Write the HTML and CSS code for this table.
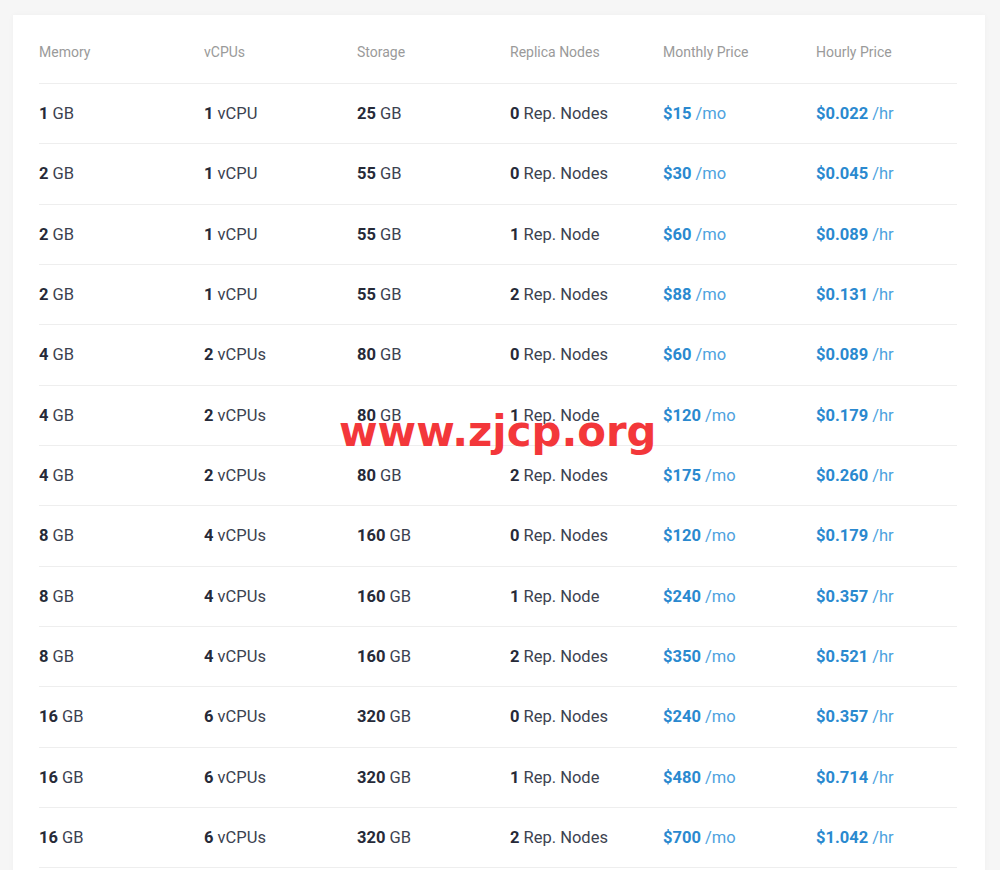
FILE: index.html
```html
<!DOCTYPE html>
<html lang="en">
<head>
<meta charset="utf-8">
<title>Pricing</title>
<link rel="stylesheet" href="styles.css">
</head>
<body>
<div class="card">
  <div class="table">
    <div class="row head">
      <div>Memory</div><div>vCPUs</div><div>Storage</div><div>Replica Nodes</div><div>Monthly Price</div><div>Hourly Price</div>
    </div>
    <div class="row"><div><b>1</b> GB</div><div><b>1</b> vCPU</div><div><b>25</b> GB</div><div><b>0</b> Rep. Nodes</div><div class="p"><b>$15</b> /mo</div><div class="p"><b>$0.022</b> /hr</div></div>
    <div class="row"><div><b>2</b> GB</div><div><b>1</b> vCPU</div><div><b>55</b> GB</div><div><b>0</b> Rep. Nodes</div><div class="p"><b>$30</b> /mo</div><div class="p"><b>$0.045</b> /hr</div></div>
    <div class="row"><div><b>2</b> GB</div><div><b>1</b> vCPU</div><div><b>55</b> GB</div><div><b>1</b> Rep. Node</div><div class="p"><b>$60</b> /mo</div><div class="p"><b>$0.089</b> /hr</div></div>
    <div class="row"><div><b>2</b> GB</div><div><b>1</b> vCPU</div><div><b>55</b> GB</div><div><b>2</b> Rep. Nodes</div><div class="p"><b>$88</b> /mo</div><div class="p"><b>$0.131</b> /hr</div></div>
    <div class="row"><div><b>4</b> GB</div><div><b>2</b> vCPUs</div><div><b>80</b> GB</div><div><b>0</b> Rep. Nodes</div><div class="p"><b>$60</b> /mo</div><div class="p"><b>$0.089</b> /hr</div></div>
    <div class="row"><div><b>4</b> GB</div><div><b>2</b> vCPUs</div><div><b>80</b> GB</div><div><b>1</b> Rep. Node</div><div class="p"><b>$120</b> /mo</div><div class="p"><b>$0.179</b> /hr</div></div>
    <div class="row"><div><b>4</b> GB</div><div><b>2</b> vCPUs</div><div><b>80</b> GB</div><div><b>2</b> Rep. Nodes</div><div class="p"><b>$175</b> /mo</div><div class="p"><b>$0.260</b> /hr</div></div>
    <div class="row"><div><b>8</b> GB</div><div><b>4</b> vCPUs</div><div><b>160</b> GB</div><div><b>0</b> Rep. Nodes</div><div class="p"><b>$120</b> /mo</div><div class="p"><b>$0.179</b> /hr</div></div>
    <div class="row"><div><b>8</b> GB</div><div><b>4</b> vCPUs</div><div><b>160</b> GB</div><div><b>1</b> Rep. Node</div><div class="p"><b>$240</b> /mo</div><div class="p"><b>$0.357</b> /hr</div></div>
    <div class="row"><div><b>8</b> GB</div><div><b>4</b> vCPUs</div><div><b>160</b> GB</div><div><b>2</b> Rep. Nodes</div><div class="p"><b>$350</b> /mo</div><div class="p"><b>$0.521</b> /hr</div></div>
    <div class="row"><div><b>16</b> GB</div><div><b>6</b> vCPUs</div><div><b>320</b> GB</div><div><b>0</b> Rep. Nodes</div><div class="p"><b>$240</b> /mo</div><div class="p"><b>$0.357</b> /hr</div></div>
    <div class="row"><div><b>16</b> GB</div><div><b>6</b> vCPUs</div><div><b>320</b> GB</div><div><b>1</b> Rep. Node</div><div class="p"><b>$480</b> /mo</div><div class="p"><b>$0.714</b> /hr</div></div>
    <div class="row"><div><b>16</b> GB</div><div><b>6</b> vCPUs</div><div><b>320</b> GB</div><div><b>2</b> Rep. Nodes</div><div class="p"><b>$700</b> /mo</div><div class="p"><b>$1.042</b> /hr</div></div>
  </div>
  <div class="watermark">www.zjcp.org</div>
</div>
</body>
</html>
```
FILE: styles.css
```css
html, body {
  margin: 0;
  padding: 0;
}
body {
  background: #f6f6f6;
  font-family: Roboto, "Liberation Sans", Arial, sans-serif;
  height: 870px;
  overflow: hidden;
}
.card {
  position: relative;
  margin: 15px 15px 0 13px;
  background: #ffffff;
  padding: 0 28px 0 26px;
  height: 900px;
  box-shadow: 0 0 6px rgba(0, 0, 0, 0.03);
}
.table {
  display: flex;
  flex-direction: column;
}
.row {
  display: grid;
  grid-template-columns: 165px 153px 153px 153px 153px 1fr;
  align-items: center;
  height: 60.333px;
  box-sizing: border-box;
  border-bottom: 1px solid #eeeeee;
  font-size: 16.5px;
  color: #3c4250;
}
.row b {
  font-weight: 700;
  color: #262a38;
}
.row.head {
  height: 69px;
  align-items: start;
  padding-top: 29px;
  font-size: 14px;
  line-height: 17px;
  color: #9a9a9a;
}
.row .p {
  color: #4da2de;
}
.row .p b {
  color: #2a89cf;
}
.watermark {
  position: absolute;
  left: 326px;
  top: 392px;
  font-family: "DejaVu Sans", "Liberation Sans", sans-serif;
  font-weight: 700;
  font-size: 41.8px;
  line-height: 50px;
  color: #f3373a;
}
```
